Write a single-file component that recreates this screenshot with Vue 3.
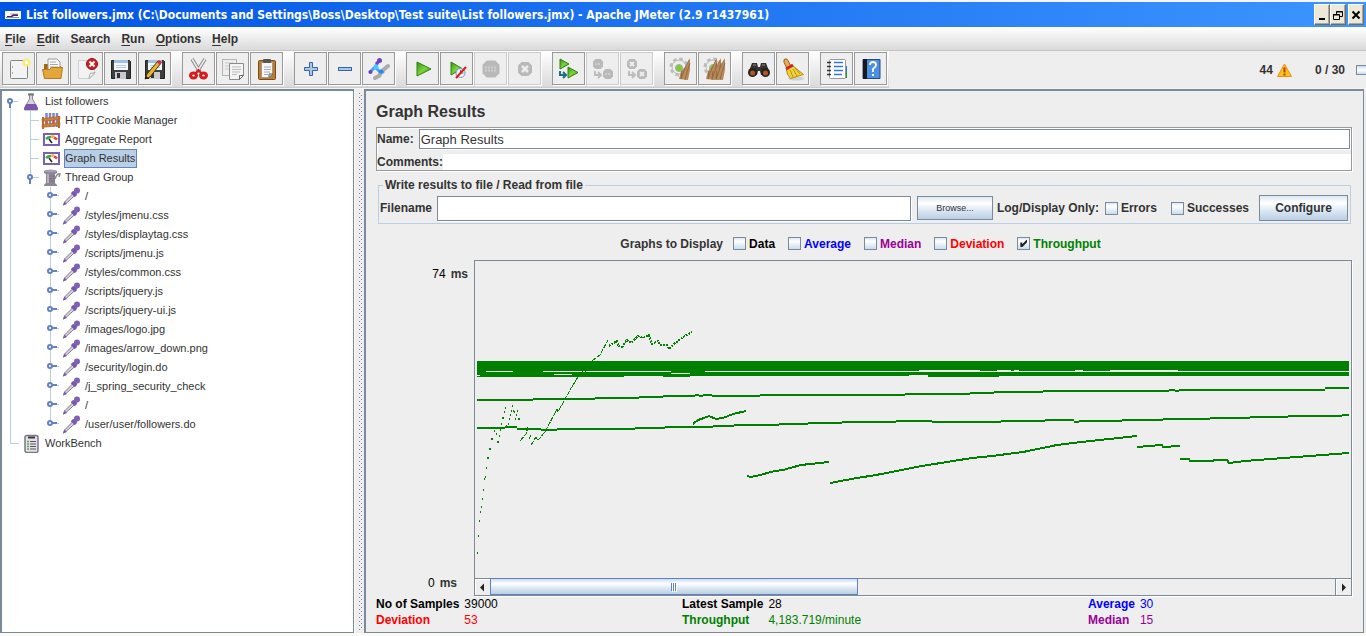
<script setup>
import { ref } from 'vue'

const menus = ['File', 'Edit', 'Search', 'Run', 'Options', 'Help']
const mnemonics = { File: 1, Edit: 1, Run: 1, Options: 1, Help: 1 }

const disk = `<path d="M2.500 3.500h18l1 1v17h-19z" fill="#3c3e40" stroke="#222"/><rect x="5" y="3" width="14" height="10" fill="#f4f8fc"/><rect x="5" y="3" width="14" height="3" fill="#9fc0e0"/><path d="M7 8.500h10M7 10.500h10" stroke="#b5c8da"/><rect x="6" y="15" width="11" height="7" fill="#c9cbcc"/><rect x="8" y="16" width="3" height="5" fill="#333"/>`
const play = (x, y, w, h) => `<path d="M${x} ${y}l${w} ${h / 2}l-${w} ${h / 2}z" fill="url(#leaf)" stroke="#2c8410"/>`
const octagon = (x, y, r) => `<path d="M${x - r / 2} ${y - r}h${r}l${r / 2} ${r / 2}v${r}l-${r / 2} ${r / 2}h-${r}l-${r / 2} -${r / 2}v-${r}z" fill="#b9b9b9"/>`
const gear = (x, y) => `<circle cx="${x}" cy="${y}" r="8" fill="none" stroke="#bcbcbc" stroke-width="3" stroke-dasharray="3.600 2.680"/><circle cx="${x}" cy="${y}" r="7" fill="#ededed" stroke="#b6b6b6"/><circle cx="${x}" cy="${y + 1}" r="3.500" fill="#7ccf2f" stroke="#aaa"/>`
const broom = (x) => `<path d="M${x + 9} 1l-4 8l-5 5l-2 8l9 1l2-10z" fill="#b98a5c"/><path d="M${x + 8} 3l-4 8l-4 11M${x + 9} 6l-3 9l-2 8M${x + 1} 14l-1 7" stroke="#835b35" stroke-width="0.700" fill="none"/>`
const bent = (x, y) => `M${x} ${y}v4h5M${x + 3} ${y + 1}l3 3l-3 3`

const groups = [
  [
    { name: 'New', art: `<rect x="3.500" y="3.500" width="17" height="18" rx="1" fill="#f3f3f3" stroke="#858585"/><path d="M5.500 9v2M5.500 15v2" stroke="#aaa"/><circle cx="19.500" cy="5.500" r="4" fill="#f7ec7c"/><circle cx="19.500" cy="5.500" r="1.500" fill="#fff"/>` },
    { name: 'Open', art: `<path d="M3 7h6l2 2h9v12H3z" fill="#9b6a13"/><path d="M7 2h9l3 3v9H7z" fill="#fafafa" stroke="#9a9a9a"/><path d="M9 5h6M9 7.500h8M9 10h8" stroke="#aaa"/><path d="M3.500 21.500l-2-9h7l2-2h11l-1.500 11z" fill="#e4a53a" stroke="#b8781b"/>` },
    { name: 'Close', art: `<path d="M3.500 3.500h16v14l-5 4h-11z" fill="#f2f2f2" stroke="#d0d0d0"/><path d="M14 21.500l1-5 5-1z" fill="#fff" stroke="#aaa"/><circle cx="17" cy="7" r="5.500" fill="#cf1f1f" stroke="#a00d0d"/><path d="M14.500 4.500l5 5M19.500 4.500l-5 5" stroke="#fff" stroke-width="2"/>` },
    { name: 'Save', art: disk },
    { name: 'Save as', art: disk + `<path d="M2 22l2-5L15 4l3 2L7 20z" fill="#e9b52b" stroke="#463612"/><path d="M14 5l2-2 3 2-2 3z" fill="#d82c2c"/><path d="M2 22l1-3 2 2z" fill="#111"/>` }
  ],
  [
    { name: 'Cut', art: `<path d="M5 2l8 13M18 2l-8 13" stroke="#8b8b8b" stroke-width="3.500"/><path d="M5 2l8 13M18 2l-8 13" stroke="#ececec" stroke-width="1.500"/><ellipse cx="6.500" cy="18.500" rx="3" ry="2.500" fill="#f6d5d5" stroke="#d71a1a" stroke-width="3"/><ellipse cx="16.500" cy="18.500" rx="3" ry="2.500" fill="#f6d5d5" stroke="#d71a1a" stroke-width="3"/><path d="M9 16l2.500-3 2.500 3" stroke="#d71a1a" stroke-width="2" fill="none"/>` },
    { name: 'Copy', art: `<rect x="1.500" y="2.500" width="14" height="16" fill="#ededed" stroke="#b5b5b5"/><path d="M4 6h9M4 9h9M4 12h6" stroke="#ccc"/><path d="M8.500 6.500h14v12l-4 4h-10z" fill="#f4f4f4" stroke="#8c8c8c"/><path d="M11 10h9M11 12.500h9M11 15h8M11 17.500h5" stroke="#bbb"/><path d="M18.500 22.500v-4h4z" fill="#fff" stroke="#666"/>` },
    { name: 'Paste', art: `<rect x="3.500" y="3.500" width="17" height="19" rx="1" fill="#bd7d2b" stroke="#7d4d10"/><path d="M6.500 5.500h11v12l-3 3h-8z" fill="#f7f7f7" stroke="#999"/><path d="M9 10h7M9 12.500h7M9 15h6M9 17.500h4" stroke="#aaa"/><rect x="8" y="2" width="8" height="4" rx="1" fill="#55564f"/><path d="M14 20.500v-3.500h4z" fill="#ddd" stroke="#666"/>` }
  ],
  [
    { name: 'Expand', art: `<path d="M10.500 5.500h3v5h5v3h-5v5h-3v-5h-5v-3h5z" fill="#a9c8e8" stroke="#3465a4"/>` },
    { name: 'Collapse', art: `<rect x="5.500" y="10.500" width="13" height="3" fill="#a9c8e8" stroke="#3465a4"/>` },
    { name: 'Toggle', art: `<path d="M8 21l4-2 3-5 6-5" stroke="#aaa" stroke-width="4" stroke-linecap="round" fill="none"/><path d="M3 15l5-5 4-6M8 10l5 5h3" stroke="#49a0f4" stroke-width="3" stroke-linecap="round" fill="none"/><path d="M12 4l-3 3" stroke="#7440c2" stroke-width="3"/><circle cx="12.500" cy="3.500" r="2.500" fill="#7440c2"/><circle cx="3.500" cy="15" r="2" fill="#7440c2"/><circle cx="9" cy="10" r="2.500" fill="#47c8ff"/><circle cx="14" cy="14.500" r="2" fill="#2784ee"/>` }
  ],
  [
    { name: 'Start', art: play(6, 5, 14, 14) },
    { name: 'Start no pauses', art: play(6, 5, 11, 13) + `<circle cx="15.500" cy="16" r="4.500" fill="#edf4fa" stroke="#6f9ab9"/><path d="M15.500 13v3h3" stroke="#4a7696" fill="none"/><path d="M11 21L21 10" stroke="#e01818" stroke-width="2"/>` },
    { name: 'Stop', off: true, art: octagon(12, 12, 8.5) + `<path d="M6 10.500h12M6 13.500h12" stroke="#cfcfcf" stroke-width="2" stroke-dasharray="2 1"/>` },
    { name: 'Shutdown', off: true, art: octagon(12, 12, 7) + `<path d="M9 9l6 6M15 9l-6 6" stroke="#ededed" stroke-width="2.500"/>` }
  ],
  [
    { name: 'Remote start all', art: play(3, 2, 9, 10) + play(11, 10, 10, 11) + `<path d="${bent(3, 14)}" stroke="#206b80" stroke-width="2" fill="none"/>` },
    { name: 'Remote stop all', off: true, art: octagon(7, 7, 5) + octagon(17, 17, 5) + `<path d="${bent(4, 14)}" stroke="#bdbdbd" stroke-width="2" fill="none"/><path d="M4 7h6M14 17h6" stroke="#cecece" stroke-width="2" stroke-dasharray="2 1"/>` },
    { name: 'Remote shutdown all', off: true, art: octagon(7, 7, 5) + octagon(17, 17, 5) + `<path d="${bent(4, 14)}" stroke="#bdbdbd" stroke-width="2" fill="none"/><path d="M5 5l4 4M9 5l-4 4M15 15l4 4M19 15l-4 4" stroke="#ededed" stroke-width="2"/>` }
  ],
  [
    { name: 'Clear', art: gear(10, 10) + broom(12) },
    { name: 'Clear all', art: gear(10, 10) + broom(5) + broom(9) + broom(13) }
  ],
  [
    { name: 'Search', art: `<path d="M5 6h5l1 4h2l1-4h5l3 8v4h-8l-1-4h-2l-1 4H2v-4z" fill="#35322f"/><circle cx="5.500" cy="15.500" r="4.500" fill="#26221e"/><circle cx="18.500" cy="15.500" r="4.500" fill="#26221e"/><circle cx="5.500" cy="16" r="2.500" fill="#b15624"/><circle cx="18.500" cy="16" r="2.500" fill="#b15624"/><path d="M6 8h3M15 8h3" stroke="#888"/>` },
    { name: 'Reset search', art: `<ellipse cx="15" cy="21.500" rx="8" ry="2" fill="#d0d0d0"/><path d="M3 2.500q3-2 4 1l3 6-4 2-3-6z" fill="#e5ab55" stroke="#9b631c"/><path d="M5.500 12.500l6-4 11 9-13 4q-4-4-4-9z" fill="#f1d13c" stroke="#b28b13"/><path d="M5 12l7-4" stroke="#cc2626" stroke-width="3"/><path d="M9 13l3 7M12 12l4 7M14 11l5 6" stroke="#b99213"/>` }
  ],
  [
    { name: 'Function helper', art: `<rect x="18" y="9" width="4" height="6" fill="#2478e0"/><rect x="18" y="15" width="4" height="6" fill="#159c25"/><rect x="4.500" y="2.500" width="16" height="19" rx="1" fill="#fff" stroke="#999"/><path d="M9 5.500h9M9 9.500h9M9 13.500h9M9 17.500h8" stroke="#2f78e8" stroke-width="1.500"/><path d="M2 5.500h4M2 9.500h4M2 13.500h4M2 17.500h4" stroke="#333" stroke-width="1.500"/>` },
    { name: 'Help', art: `<path d="M4 2.500h17v19H4z" fill="#4d8fe0" stroke="#254c80"/><rect x="4" y="2" width="4" height="20" fill="#17191d"/><path d="M11 8q0-3 3-3t3 3q0 2-3 4v3M14 17v2" stroke="#fff" stroke-width="1.800" fill="none"/>` }
  ]
]

const treeIcons = {
  plan: `<path d="M8.500 2h3v5l5 9v2h-13v-2l5-9z" fill="#d6d4dc" stroke="#8b8a96"/><path d="M5 12h10l2 5-1 1H4l-1-1z" fill="#7c55ad"/><path d="M7 2.500h6" stroke="#77757d" stroke-width="2"/>`,
  cookie: `<path d="M5.500 2v14M9 2v14M12.500 2v14M16 2v14" stroke="#8684c0" stroke-width="2.500"/><path d="M5.500 8v6M12.500 8v6" stroke="#e04848" stroke-width="2"/><path d="M1 7.500l18-2v3l-18 2zM1 13.500l18-2v3l-18 2z" fill="#cd8139" stroke="#94581c" stroke-width="0.500"/><path d="M2 6v12M18 5v12" stroke="#b96c2a" stroke-width="2"/>`,
  report: `<rect x="3" y="4" width="15" height="11" fill="#fff" stroke="#7b62ae" stroke-width="2"/><path d="M5 9q2-2 5-2" stroke="#37a853" stroke-width="2.500" fill="none"/><path d="M10 7q2-1 3 0" stroke="#f2b02c" stroke-width="2.500" fill="none"/><path d="M13 7.500q2 1 3 2" stroke="#e04432" stroke-width="2.500" fill="none"/><path d="M8 9l3 4" stroke="#222" stroke-width="1.500"/>`,
  group: `<path d="M3 3h13v2l-2 1v9l2 2v1H3v-1l2-2V6L3 5z" fill="#8d8593"/><path d="M7 6v9" stroke="#b7b0bd" stroke-width="2"/><path d="M8 8h6M8 10.500h6M8 13h6" stroke="#7b7384"/><path d="M14 11q2-6 5-5l-1 3" stroke="#8d8593" stroke-width="1.500" fill="none"/><ellipse cx="9.500" cy="3" rx="6.500" ry="1.500" fill="#a79faf"/>`,
  sampler: `<path d="M2.500 18l1-3L13 5.500l2 2L5.500 16z" fill="#d8d4de" stroke="#81788e"/><path d="M2 18.500l1.500-4 2.500 2.500z" fill="#7a5ab0"/><path d="M11 5l4 4M13 7l3-3" stroke="#7857ad" stroke-width="3.500"/><circle cx="16" cy="3.500" r="3" fill="#8060b5"/>`,
  bench: `<rect x="4" y="1.500" width="13" height="17" rx="2" fill="#e3e0e8" stroke="#7d7688" stroke-width="1.500"/><path d="M7 3.500h7" stroke="#3a3a3a" stroke-width="2"/><path d="M9 7.500h6M9 10h6M9 12.500h6M9 15h6" stroke="#555"/><path d="M6 7.500h2M6 10h2M6 12.500h2M6 15h2" stroke="#58b04c" stroke-width="1.500"/>`
}

const samplers = [
  '/', '/styles/jmenu.css', '/styles/displaytag.css', '/scripts/jmenu.js', '/styles/common.css',
  '/scripts/jquery.js', '/scripts/jquery-ui.js', '/images/logo.jpg', '/images/arrow_down.png',
  '/security/login.do', '/j_spring_security_check', '/', '/user/user/followers.do'
]

const rows = [
  { label: 'List followers', icon: 'plan', depth: 0, lines: 'M8 10V19M10 9.500H16', open: 8 },
  { label: 'HTTP Cookie Manager', icon: 'cookie', depth: 1, lines: 'M8 0V19M28 0V19M28 9.500H37' },
  { label: 'Aggregate Report', icon: 'report', depth: 1, lines: 'M8 0V19M28 0V19M28 9.500H37' },
  { label: 'Graph Results', icon: 'report', depth: 1, lines: 'M8 0V19M28 0V19M28 9.500H37', selected: true },
  { label: 'Thread Group', icon: 'group', depth: 1, lines: 'M8 0V19M28 0V10M28 9.500H37', open: 28 },
  ...samplers.map((label, i) => ({
    label, icon: 'sampler', depth: 2, closed: 48,
    lines: `M8 0V19M48 0V${i === samplers.length - 1 ? 9 : 19}M48 8.500H57`
  })),
  { label: 'WorkBench', icon: 'bench', depth: 0, lines: 'M8 0V9.500H17' }
]

const series = ref([
  { name: 'Data', tone: 'black', on: false },
  { name: 'Average', tone: 'blue', on: false },
  { name: 'Median', tone: 'purple', on: false },
  { name: 'Deviation', tone: 'red', on: false },
  { name: 'Throughput', tone: 'green', on: true }
])

const stats = [
  [['No of Samples', '39000', 'black'], ['Deviation', '53', 'red']],
  [['Latest Sample', '28', 'black'], ['Throughput', '4,183.719/minute', 'green']],
  [['Average', '30', 'blue'], ['Median', '15', 'purple']]
]

const name = ref('Graph Results')
const comments = ref('')
const filename = ref('')

// Fraction of the recorded samples that fits in the plot.
const visible = 871 / 2000

// Each series below is a list of [x, y] steps; the last pair only closes the run.
const steps = (list) => list.slice(0, -1).map(([x, y], i) => ({ x, y, w: list[i + 1][0] - x }))
const upper = steps([[477, 399], [533, 398], [595, 397], [639, 396], [663, 395], [695, 394], [699, 395], [703, 394], [712, 395], [760, 394], [905, 393], [970, 392], [994, 391], [1019, 391], [1043, 390], [1169, 389], [1175, 390], [1179, 389], [1325, 387], [1349, 0]])
const lower = steps([[477, 427], [505, 426], [517, 428], [541, 429], [557, 428], [635, 427], [665, 426], [713, 425], [734, 424], [779, 423], [808, 422], [842, 421], [896, 420], [932, 421], [1001, 420], [1045, 419], [1074, 421], [1079, 420], [1122, 419], [1163, 418], [1210, 417], [1250, 416], [1288, 415], [1342, 414], [1349, 0]])
const gaps = [[486, 371, 27, 1], [543, 371, 42, 1], [586, 371, 85, 1], [554, 374, 18, 1], [671, 373, 19, 1], [705, 371, 644, 1], [919, 370, 61, 1], [997, 370, 14, 1], [1014, 370, 5, 1], [1075, 370, 8, 1], [1110, 370, 68, 1], [477, 375, 3, 1], [909, 375, 19, 1]]
const dots = [[477, 552], [478, 535], [479, 520], [480, 511], [481, 506], [482, 498], [483, 489], [484, 478], [485, 476], [486, 467], [490, 448], [487, 457], [488, 457], [489, 448], [491, 438], [492, 438], [494, 430], [496, 433], [497, 441], [498, 441], [499, 435], [500, 429], [501, 423], [502, 417], [503, 417], [504, 411], [505, 407], [506, 425], [508, 423], [509, 418], [510, 414], [511, 410], [512, 405], [513, 410], [514, 411], [515, 418], [516, 414], [517, 410], [518, 418], [519, 418], [529, 437], [530, 435]]
const trends = [
  '693,424 698,420 704,418 709,416 716,419 723,418 733,414 746,411',
  '747,476 751,477 760,475 775,471 783,470 801,465 829,462',
  '830,483 857,478 876,475 922,466 953,461 972,458 992,456 1023,452 1057,445 1081,442 1137,436',
  '1137,447 1149,446 1162,445 1163,447 1180,446',
  '1180,459 1189,459 1190,461 1212,461 1215,460 1227,460 1229,463 1245,461 1349,453'
]
const ramps = ['520,441 526,434 528,427', '531,445 536,437 538,440 545,432 557,409 558,412 570,390 578,377 592,361', '592,361 600,355 608,340']
const jitter = '609,346 612,344 617,341 618,346 622,347 627,340 631,343 638,336 643,338 649,335 652,344 658,341 660,345 667,345 669,349 674,344 683,337 692,332'
</script>

<template>
  <div class="window">
    <header class="titlebar">
      <svg class="app-icon" viewBox="0 0 16 8" aria-hidden="true"><rect width="16" height="8" fill="#fff" /><path d="M2 5h4l2-2h5v2H9L7 6H2z" fill="#3a2b58" /><path d="M5 3h8" stroke="#d487a9" /><path d="M1 6.500h13" stroke="#8790b0" /></svg>
      <h1>List followers.jmx (C:\Documents and Settings\Boss\Desktop\Test suite\List followers.jmx) - Apache JMeter (2.9 r1437961)</h1>
      <button class="win" aria-label="Minimize"><svg viewBox="0 0 12 14"><path d="M3 11h6" stroke="#000" stroke-width="2" /></svg></button>
      <button class="win" aria-label="Restore"><svg viewBox="0 0 12 14"><path d="M4.500 6V3.500h6v5H8M4 4h7M1.500 6.500h6v5h-6zM1 7h7" fill="none" stroke="#000" /></svg></button>
      <button class="win close" aria-label="Close"><svg viewBox="0 0 12 14"><path d="M2.500 3.500l7 7M9.500 3.500l-7 7" stroke="#000" stroke-width="2" /></svg></button>
    </header>

    <nav class="menubar">
      <button v-for="m in menus" :key="m"><span :class="{ key: mnemonics[m] }">{{ m[0] }}</span>{{ m.slice(1) }}</button>
    </nav>

    <div class="toolbar">
      <div class="tools">
        <div v-for="(group, g) in groups" :key="g" class="group">
          <button v-for="t in group" :key="t.name" class="tool" :class="{ off: t.off }" :disabled="t.off" :aria-label="t.name">
            <svg viewBox="0 0 24 24" v-html="t.art"></svg>
          </button>
        </div>
      </div>
      <div class="counters">
        <span>44</span>
        <svg class="warn" viewBox="0 0 15 14"><path d="M7.500 1L14.500 13.500H0.500z" fill="#ffc21a" stroke="#f08c10" /><path d="M7.500 4.500v5M7.500 10.500v2" stroke="#b4400c" stroke-width="2" /></svg>
        <span class="threads">0 / 30</span>
        <span class="light"></span>
      </div>
    </div>

    <svg class="defs" aria-hidden="true"><defs><linearGradient id="leaf" x1="0" y1="0" x2="1" y2="1"><stop offset="0" stop-color="#2f9416" /><stop offset="0.500" stop-color="#7fd23a" /><stop offset="1" stop-color="#2f9416" /></linearGradient></defs></svg>

    <main class="split">
      <ul class="tree" role="tree">
        <li v-for="(r, i) in rows" :key="i" role="treeitem" :aria-selected="!!r.selected">
          <svg class="guide" :class="'d' + r.depth" height="19">
            <path :d="r.lines" fill="none" stroke="#b8cfe5" shape-rendering="crispEdges" />
            <g v-if="r.open" fill="#fff" stroke="#6382bf" stroke-width="2"><path :d="`M${r.open} 10v6`" /><circle :cx="r.open" cy="9" r="2" /></g>
            <g v-if="r.closed" fill="#fff" stroke="#6382bf" stroke-width="2"><path :d="`M${r.closed} 8h7`" /><circle :cx="r.closed" cy="8" r="2" /></g>
          </svg>
          <svg class="node" viewBox="0 0 20 19" v-html="treeIcons[r.icon]"></svg>
          <span class="label" :class="{ selected: r.selected }">{{ r.label }}</span>
        </li>
      </ul>
      <div class="divider">
        <svg aria-hidden="true"><defs><pattern id="grip" width="4" height="4" patternUnits="userSpaceOnUse"><rect width="1" height="1" fill="#7a8a99" /><rect x="2" y="2" width="1" height="1" fill="#7a8a99" /></pattern></defs><rect width="4" height="100%" fill="url(#grip)" /></svg>
      </div>
      <section class="panel">
        <h2>Graph Results</h2>
        <div class="namebox">
          <div class="namerow"><label for="name">Name:</label><input id="name" v-model="name" type="text"></div>
          <div class="commentrow"><label for="comments">Comments:</label><input id="comments" v-model="comments" type="text"></div>
        </div>
        <fieldset>
          <legend>Write results to file / Read from file</legend>
          <div class="filerow">
            <label for="filename">Filename</label>
            <input id="filename" v-model="filename" type="text">
            <button class="metal browse">Browse...</button>
            <span class="only">Log/Display Only:</span>
            <div class="filters">
              <label class="check"><input type="checkbox">Errors</label>
              <label class="check"><input type="checkbox">Successes</label>
            </div>
            <button class="metal configure">Configure</button>
          </div>
        </fieldset>
        <div class="series">
          <span>Graphs to Display</span>
          <label v-for="s in series" :key="s.name" class="check" :class="s.tone"><input v-model="s.on" type="checkbox">{{ s.name }}</label>
        </div>
        <div class="graph">
          <div class="axis">
            <div><span>74</span><b>ms</b></div>
            <div class="zero"><span>0</span><b>ms</b></div>
          </div>
          <div class="plot">
            <div class="canvas">
              <svg viewBox="475 261 876 317" preserveAspectRatio="none" shape-rendering="crispEdges">
                <g fill="#008000">
                  <rect x="477" y="361" width="872" height="15" />
                  <rect x="477" y="376" width="147" height="1" />
                  <rect x="663" y="376" width="27" height="1" />
                  <rect x="928" y="376" width="71" height="1" />
                  <rect v-for="(s, i) in upper" :key="'u' + i" :x="s.x" :y="s.y" :width="s.w" height="2" />
                  <rect v-for="(s, i) in lower" :key="'l' + i" :x="s.x" :y="s.y" :width="s.w" height="2" />
                  <rect v-for="(d, i) in dots" :key="'d' + i" :x="d[0]" :y="d[1]" width="1" height="2" />
                </g>
                <rect v-for="(g, i) in gaps" :key="'g' + i" :x="g[0]" :y="g[1]" :width="g[2]" :height="g[3]" fill="#eee" />
                <g fill="none" stroke="#008000">
                  <polyline v-for="(t, i) in trends" :key="'t' + i" :points="t" stroke-width="2" />
                  <polyline v-for="(t, i) in ramps" :key="'r' + i" :points="t" stroke-dasharray="5 1" />
                  <polyline :points="jitter" stroke-width="2" stroke-dasharray="2 1" />
                </g>
              </svg>
            </div>
            <div class="scroll">
              <button aria-label="Scroll left"><svg viewBox="0 0 15 15"><path d="M9 3.500v8l-4-4z" fill="#222" /></svg></button>
              <div class="track"><div class="thumb" :style="{ width: visible * 100 + '%' }"><i></i><i></i><i></i></div></div>
              <button class="right" aria-label="Scroll right"><svg viewBox="0 0 15 15"><path d="M6 3.500v8l4-4z" fill="#222" /></svg></button>
            </div>
          </div>
        </div>
        <div class="stats">
          <dl v-for="(col, i) in stats" :key="i">
            <template v-for="s in col" :key="s[0]"><dt :class="s[2]">{{ s[0] }}</dt><dd :class="s[2]">{{ s[1] }}</dd></template>
          </dl>
        </div>
      </section>
    </main>
  </div>
</template>

<style>
body { background: #eee; }
</style>

<style scoped>
* { box-sizing: border-box; }
.window { display: flex; flex-direction: column; min-height: 100vh; background: #eee; color: #333; font: bold 12px/14px "Liberation Sans", Arial, sans-serif; border-bottom: 3px solid #fbfaf4; }
button, input { font: inherit; color: inherit; margin: 0; border-radius: 0; }
button { padding: 0; }
svg { display: block; }
.defs { width: 0; height: 0; position: absolute; }
.titlebar { display: flex; align-items: center; height: 27px; padding: 0 2px 0 5px; border-top: 2px solid #f4f6fb; background: linear-gradient(90deg, #0054e3, #3d95ff); color: #fff; }
.app-icon { width: 16px; height: 8px; margin-right: 5px; flex: none; }
h1 { flex: 1; margin: 0; font: bold 12px/20px "DejaVu Sans Condensed", "DejaVu Sans", sans-serif; white-space: nowrap; overflow: hidden; }
.win { width: 16px; height: 21px; background: #ece9d8; border: 1px solid; border-color: #fff #716f64 #716f64 #fff; box-shadow: inset -1px -1px 0 #aca899; display: grid; place-items: center; }
.win svg { width: 12px; height: 14px; }
.close { margin-left: 2px; }
.menubar { display: flex; gap: 11px; height: 24px; padding: 0 5px; background: linear-gradient(#fff, #dadada); border-bottom: 1px solid #c4c4c4; }
.menubar button { border: 0; background: none; }
.key { text-decoration: underline; text-underline-offset: 2px; }
.toolbar { display: flex; height: 38px; border-bottom: 1px solid #f4f4f4; }
.tools { display: flex; gap: 10px; padding: 1px 1px 0 2px; background: linear-gradient(#fff, #dadada); border-bottom: 1px solid #ccc; }
.group { display: flex; gap: 1px; padding-right: 1px; }
.tool { width: 33px; height: 33px; display: grid; place-items: center; background: #eee; border: 1px solid #999; box-shadow: 1px 1px 0 #fff; }
.tool svg { width: 24px; height: 24px; }
.tool.off { border-color: #ccc; }
.counters { flex: 1; display: flex; justify-content: flex-end; align-items: center; }
.warn { width: 15px; height: 14px; margin: 0 23px 0 4px; }
.light { width: 10px; height: 10px; margin-left: 11px; border: 1px solid #7a8a99; border-right: 0; background: linear-gradient(#c8dcef, #fff, #c8dcef); }

.split { flex: 1; display: flex; padding-right: 2px; }
.tree { flex: 0 0 354px; margin: 0; padding: 1px 0; list-style: none; background: #fff; border: 1px solid #7a8a99; border-width: 2px 1px 1px 2px; font-weight: normal; font-size: 11px; }
.tree li { display: flex; align-items: center; height: 19px; }
.guide { flex: none; }
.d0 { width: 19px; }
.d1 { width: 39px; }
.d2 { width: 59px; }
.node { width: 20px; height: 19px; flex: none; margin-right: 3px; }
.label { padding: 1px 1px 1px 0; border: 1px solid transparent; line-height: 15px; white-space: nowrap; }
.selected { background: #b8cfe5; border-color: #6382bf; }
.divider { flex: 0 0 10px; display: flex; margin-top: 2px; padding: 2px 0 2px 4px; border-left: 1px solid #fff; }
.divider svg { width: 4px; height: auto; }

.panel { flex: 1; min-width: 0; display: flex; flex-direction: column; padding: 11px 11px 4px 10px; border: 1px solid #7a8a99; border-width: 2px 1px 1px 2px; }
h2 { margin: 0 0 5px; font-size: 16px; line-height: 20px; }
.namebox { display: flex; flex-direction: column; gap: 5px; padding-top: 1px; border: 1px solid #999; box-shadow: 1px 1px 0 #fff, inset 1px 1px 0 #fff; }
.namerow, .commentrow { display: flex; align-items: center; }
.namerow { padding-right: 1px; gap: 5px; }
input[type="text"] { flex: 1; min-width: 0; padding: 0 1px; background: #fff; border: 1px solid #7a8a99; box-shadow: 1px 1px 0 #fff; font-weight: normal; font-size: 13px; outline: 0; }
.namerow input { height: 20px; }
.commentrow input { height: 16px; border: 0; box-shadow: none; }
fieldset { min-width: 0; margin: 7px 1px 0 2px; padding: 3px 2px 2px 1px; border: 1px solid #b8cfe5; }
legend { margin-left: 3px; padding: 0 2px; }
.filerow { display: flex; align-items: center; height: 26px; white-space: nowrap; }
.filerow input[type="text"] { height: 25px; margin: 0 6px 0 5px; }
.metal { border: 1px solid #7a8a99; background: linear-gradient(#dde8f3, #fff 30%, #dde8f3 60%, #b8cfe5); }
.browse { width: 76px; height: 24px; font-size: 9px; font-weight: normal; }
.only { margin-left: 4px; }
.filters { display: flex; gap: 14px; margin: 0 10px 0 6px; }
.check { display: flex; align-items: center; gap: 3px; }
.configure { width: 89px; height: 26px; }
input[type="checkbox"] { appearance: none; width: 13px; height: 13px; border: 1px solid #7a8a99; background: linear-gradient(#dde8f3, #fff 30%, #c8dcef); }
input[type="checkbox"]:checked::before { content: ""; display: block; width: 7px; height: 7px; margin: 2px; background: #222; clip-path: polygon(0 35%, 28% 35%, 28% 60%, 85% 0, 100% 0, 100% 28%, 30% 100%, 0 100%); }
.series { display: flex; justify-content: center; align-items: center; gap: 13px; height: 36px; padding: 3px 7px 0 0; }
.series span { margin-right: -3px; }
.black { color: #000; }
.blue { color: #00f; }
.purple { color: #909; }
.red { color: #f00; }
.green { color: #008000; }

.graph { flex: 1; display: flex; min-height: 240px; }
.axis { flex: 0 0 98px; display: flex; flex-direction: column; justify-content: space-between; align-items: flex-end; padding: 7px 6px 6px 0; }
.axis div { display: flex; gap: 5px; }
.axis span { color: #000; font-weight: normal; }
.axis .zero { padding-right: 11px; }
.plot { flex: 1; min-width: 0; display: flex; flex-direction: column; border: 1px solid #7a8a99; box-shadow: 1px 1px 0 #fff; }
.canvas { flex: 1; display: flex; min-height: 0; }
.canvas svg { width: 100%; height: 100%; }
.scroll { display: flex; height: 17px; border-top: 1px solid #7a8a99; }
.scroll button { width: 15px; border: 0; background: #eee; box-shadow: inset 1px 1px 0 #fff; }
.scroll .right { width: 16px; border-left: 1px solid #7a8a99; }
.track { flex: 1; display: flex; margin-top: -1px; box-shadow: inset 0 2px 0 -1px #7a8a99; }
.thumb { display: flex; justify-content: center; align-items: center; gap: 1px; border: 1px solid #6382bf; background: linear-gradient(#c8dcef, #fff 30%, #dde8f3 60%, #b8cfe5); }
.thumb i { width: 1px; height: 8px; background: #6382bf; box-shadow: 1px 1px 0 #fff; }
.stats { display: grid; grid-template-columns: 306fr 406fr 264fr; }
dl { display: grid; grid-template-columns: auto 1fr; column-gap: 5px; margin: 0; line-height: 16px; }
dd { margin: 0; font-weight: normal; }
</style>
